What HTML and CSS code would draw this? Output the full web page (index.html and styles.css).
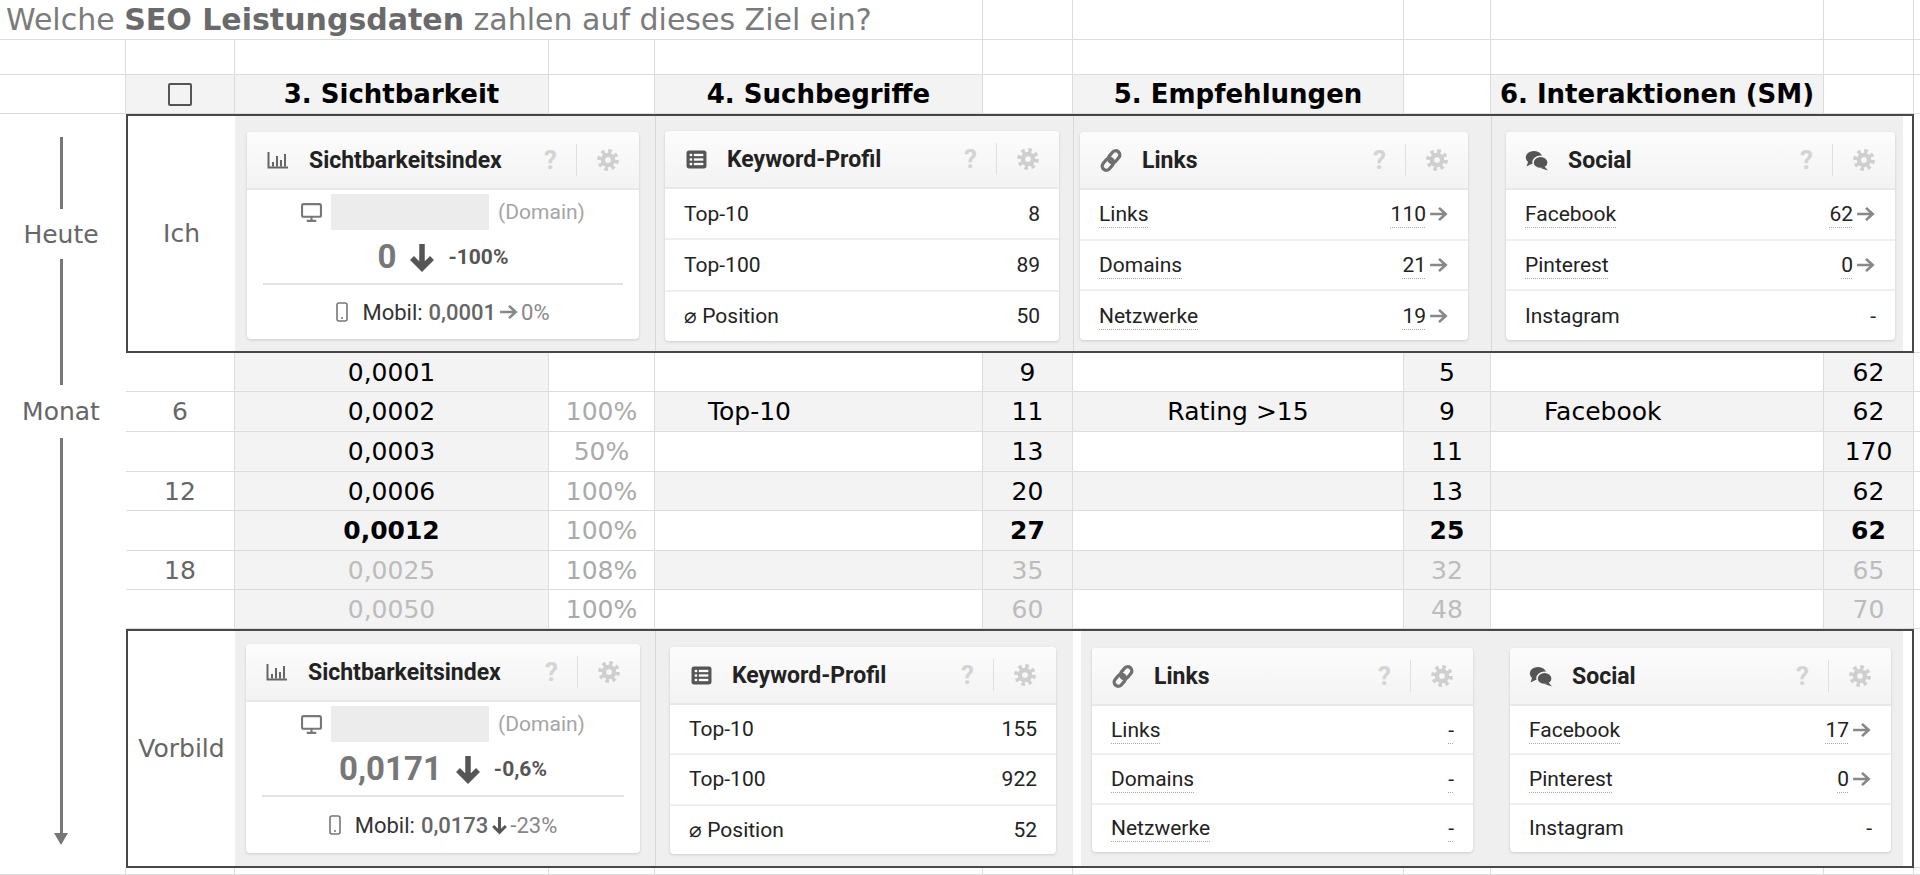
FILE: index.html
```html
<!DOCTYPE html>
<html lang="de">
<head>
<meta charset="utf-8">
<title>SEO Leistungsdaten</title>
<link rel="stylesheet" href="styles.css">
</head>
<body>
<div class="sheet">
  <!-- row 1 -->
  <div class="c title-cell">Welche&nbsp;<b>SEO Leistungsdaten</b>&nbsp;zahlen auf dieses Ziel ein?</div>
  <div class="c"></div><div class="c"></div><div class="c"></div><div class="c"></div><div class="c"></div><div class="c last"></div>
  <!-- row 2 -->
  <div class="c"></div><div class="c"></div><div class="c"></div><div class="c"></div><div class="c"></div><div class="c"></div><div class="c"></div><div class="c"></div><div class="c"></div><div class="c"></div><div class="c last"></div>
  <!-- row 3 header -->
  <div class="c"></div>
  <div class="c g"><span class="checkbox"></span></div>
  <div class="c g hd">3. Sichtbarkeit</div>
  <div class="c"></div>
  <div class="c g hd">4. Suchbegriffe</div>
  <div class="c"></div>
  <div class="c g hd">5. Empfehlungen</div>
  <div class="c"></div>
  <div class="c g hd">6. Interaktionen (SM)</div>
  <div class="c"></div>
  <div class="c last"></div>

  <!-- timeline column -->
  <div class="timeline">
    <div class="tl-seg s1"></div>
    <div class="tl-lab l1">Heute</div>
    <div class="tl-seg s2"></div>
    <div class="tl-lab l2">Monat</div>
    <div class="tl-seg s3"></div>
    <div class="tl-head"></div>
  </div>

  <!-- Ich box -->
  <div class="box row-ich">
    <div class="who">Ich</div>
    <div class="panel pi1">
      <div class="card ci1">
        <div class="card-head">
          <span class="ico"><svg width="22" height="18" viewBox="0 0 22 18"><path d="M1.5 1v15.5H21" stroke="#666" stroke-width="2" fill="none"/><rect x="5" y="11" width="2" height="4.5" fill="#666"/><rect x="9" y="5" width="2" height="10.5" fill="#666"/><rect x="13" y="9" width="2" height="6.5" fill="#666"/><rect x="17" y="3" width="2" height="12.5" fill="#666"/></svg></span>
          <span class="title">Sichtbarkeitsindex</span>
          <span class="help">?</span><span class="sep"></span>
          <svg class="gear" width="22" height="22" viewBox="0 0 20 20"><circle cx="10" cy="10" r="6.6" fill="#cfcfcf"/><circle cx="10" cy="10" r="8" fill="none" stroke="#cfcfcf" stroke-width="3.8" stroke-dasharray="3.14 3.14"/><circle cx="10" cy="10" r="2.6" fill="#f7f7f7"/></svg>
        </div>
        <div class="si-body">
          <div class="si-dom">
            <svg width="21" height="19" viewBox="0 0 20 18"><rect x="1" y="1" width="18" height="12" rx="1.5" stroke="#777" stroke-width="2" fill="none"/><path d="M10 13v3M5.5 17h9" stroke="#777" stroke-width="2"/></svg>
            <span class="si-rect"></span><span class="si-domtxt">(Domain)</span>
          </div>
          <div class="si-val">
            <span class="si-num">0</span>
            <svg width="30" height="30" viewBox="0 0 30 30"><path d="M15 2v24M5 16l10 10 10-10" stroke="#555" stroke-width="5.5" fill="none"/></svg>
            <span class="si-pct">-100%</span>
          </div>
          <div class="si-div"></div>
          <div class="si-mob">
            <svg class="phone" width="12" height="20" viewBox="0 0 12 20"><rect x="1" y="1" width="10" height="18" rx="2" stroke="#777" stroke-width="1.6" fill="none"/><circle cx="6" cy="16" r="1" fill="#777"/></svg>
            <span class="mob-l">Mobil:</span><span class="mob-v">0,0001</span>
            <svg class="rarr" width="20" height="16" viewBox="0 0 18 14"><path d="M1 7h14M9 1.5l6 5.5-6 5.5" stroke="#888" stroke-width="2.4" fill="none"/></svg>
            <span class="mob-p">0%</span>
          </div>
        </div>
      </div>
    </div>
    <div class="panel pi2">
      <div class="card ci2">
        <div class="card-head">
          <span class="ico"><svg width="21" height="19" viewBox="0 0 20 18"><rect x="0.5" y="0.5" width="19" height="17" rx="2.5" fill="#555"/><rect x="3.5" y="3.6" width="2.4" height="2.2" fill="#fff"/><rect x="7.5" y="3.6" width="9" height="2.2" fill="#fff"/><rect x="3.5" y="7.9" width="2.4" height="2.2" fill="#fff"/><rect x="7.5" y="7.9" width="9" height="2.2" fill="#fff"/><rect x="3.5" y="12.2" width="2.4" height="2.2" fill="#fff"/><rect x="7.5" y="12.2" width="9" height="2.2" fill="#fff"/></svg></span>
          <span class="title">Keyword-Profil</span>
          <span class="help">?</span><span class="sep"></span>
          <svg class="gear" width="22" height="22" viewBox="0 0 20 20"><circle cx="10" cy="10" r="6.6" fill="#cfcfcf"/><circle cx="10" cy="10" r="8" fill="none" stroke="#cfcfcf" stroke-width="3.8" stroke-dasharray="3.14 3.14"/><circle cx="10" cy="10" r="2.6" fill="#f7f7f7"/></svg>
        </div>
        <div class="row"><span>Top-10</span><span>8</span></div>
        <div class="row"><span>Top-100</span><span>89</span></div>
        <div class="row"><span>&#8960; Position</span><span>50</span></div>
      </div>
    </div>
    <div class="panel pi3">
      <div class="card ci3">
        <div class="card-head">
          <span class="ico"><svg width="25" height="25" viewBox="0 0 22 22"><g transform="rotate(-50 11 11)" stroke="#6f6f6f" stroke-width="3" fill="none"><rect x="0.5" y="7.2" width="12" height="7.6" rx="3.8"/><rect x="9.5" y="7.2" width="12" height="7.6" rx="3.8"/></g></svg></span>
          <span class="title">Links</span>
          <span class="help">?</span><span class="sep"></span>
          <svg class="gear" width="22" height="22" viewBox="0 0 20 20"><circle cx="10" cy="10" r="6.6" fill="#cfcfcf"/><circle cx="10" cy="10" r="8" fill="none" stroke="#cfcfcf" stroke-width="3.8" stroke-dasharray="3.14 3.14"/><circle cx="10" cy="10" r="2.6" fill="#f7f7f7"/></svg>
        </div>
        <div class="row"><span class="dot">Links</span><span class="val"><span class="dot">110</span><svg class="rarr" width="20" height="16" viewBox="0 0 18 14"><path d="M1 7h14M9 1.5l6 5.5-6 5.5" stroke="#888" stroke-width="2.4" fill="none"/></svg></span></div>
        <div class="row"><span class="dot">Domains</span><span class="val"><span class="dot">21</span><svg class="rarr" width="20" height="16" viewBox="0 0 18 14"><path d="M1 7h14M9 1.5l6 5.5-6 5.5" stroke="#888" stroke-width="2.4" fill="none"/></svg></span></div>
        <div class="row"><span class="dot">Netzwerke</span><span class="val"><span class="dot">19</span><svg class="rarr" width="20" height="16" viewBox="0 0 18 14"><path d="M1 7h14M9 1.5l6 5.5-6 5.5" stroke="#888" stroke-width="2.4" fill="none"/></svg></span></div>
      </div>
    </div>
    <div class="panel pi4">
      <div class="card ci4">
        <div class="card-head">
          <span class="ico"><svg width="27" height="23" viewBox="0 0 24 21"><ellipse cx="9" cy="7.5" rx="8.2" ry="6.6" fill="#555"/><path d="M3.2 11.5L1.5 16.5 8 13.2z" fill="#555"/><ellipse cx="15.6" cy="12.4" rx="7.6" ry="6.2" fill="#555" stroke="#f7f7f7" stroke-width="1.6"/><path d="M19.5 16.5L23 20.5 15.5 18z" fill="#555"/></svg></span>
          <span class="title">Social</span>
          <span class="help">?</span><span class="sep"></span>
          <svg class="gear" width="22" height="22" viewBox="0 0 20 20"><circle cx="10" cy="10" r="6.6" fill="#cfcfcf"/><circle cx="10" cy="10" r="8" fill="none" stroke="#cfcfcf" stroke-width="3.8" stroke-dasharray="3.14 3.14"/><circle cx="10" cy="10" r="2.6" fill="#f7f7f7"/></svg>
        </div>
        <div class="row"><span class="dot">Facebook</span><span class="val"><span class="dot">62</span><svg class="rarr" width="20" height="16" viewBox="0 0 18 14"><path d="M1 7h14M9 1.5l6 5.5-6 5.5" stroke="#888" stroke-width="2.4" fill="none"/></svg></span></div>
        <div class="row"><span class="dot">Pinterest</span><span class="val"><span class="dot">0</span><svg class="rarr" width="20" height="16" viewBox="0 0 18 14"><path d="M1 7h14M9 1.5l6 5.5-6 5.5" stroke="#888" stroke-width="2.4" fill="none"/></svg></span></div>
        <div class="row"><span>Instagram</span><span>-</span></div>
      </div>
    </div>
  </div>
  <div class="c last"></div>

  <!-- data rows -->
  <div class="c"></div><div class="c g">0,0001</div><div class="c"></div><div class="c"></div><div class="c g">9</div><div class="c"></div><div class="c g">5</div><div class="c"></div><div class="c g">62</div><div class="c last"></div>

  <div class="c lab">6</div><div class="c g">0,0002</div><div class="c pc">100%</div><div class="c g left">Top-10</div><div class="c g">11</div><div class="c g">Rating &gt;15</div><div class="c g">9</div><div class="c g left">Facebook</div><div class="c g">62</div><div class="c last"></div>

  <div class="c"></div><div class="c g">0,0003</div><div class="c pc">50%</div><div class="c"></div><div class="c g">13</div><div class="c"></div><div class="c g">11</div><div class="c"></div><div class="c g">170</div><div class="c last"></div>

  <div class="c lab">12</div><div class="c g">0,0006</div><div class="c pc">100%</div><div class="c g"></div><div class="c g">20</div><div class="c g"></div><div class="c g">13</div><div class="c g"></div><div class="c g">62</div><div class="c last"></div>

  <div class="c"></div><div class="c g b">0,0012</div><div class="c pc">100%</div><div class="c"></div><div class="c g b">27</div><div class="c"></div><div class="c g b">25</div><div class="c"></div><div class="c g b">62</div><div class="c last"></div>

  <div class="c lab">18</div><div class="c g fd">0,0025</div><div class="c pc">108%</div><div class="c g"></div><div class="c g fd">35</div><div class="c g"></div><div class="c g fd">32</div><div class="c g"></div><div class="c g fd">65</div><div class="c last"></div>

  <div class="c"></div><div class="c g fd">0,0050</div><div class="c pc">100%</div><div class="c"></div><div class="c g fd">60</div><div class="c"></div><div class="c g fd">48</div><div class="c"></div><div class="c g fd">70</div><div class="c last"></div>

  <!-- Vorbild box -->
  <div class="box row-vor">
    <div class="who">Vorbild</div>
    <div class="panel pv1">
      <div class="card cv1">
        <div class="card-head">
          <span class="ico"><svg width="22" height="18" viewBox="0 0 22 18"><path d="M1.5 1v15.5H21" stroke="#666" stroke-width="2" fill="none"/><rect x="5" y="11" width="2" height="4.5" fill="#666"/><rect x="9" y="5" width="2" height="10.5" fill="#666"/><rect x="13" y="9" width="2" height="6.5" fill="#666"/><rect x="17" y="3" width="2" height="12.5" fill="#666"/></svg></span>
          <span class="title">Sichtbarkeitsindex</span>
          <span class="help">?</span><span class="sep"></span>
          <svg class="gear" width="22" height="22" viewBox="0 0 20 20"><circle cx="10" cy="10" r="6.6" fill="#cfcfcf"/><circle cx="10" cy="10" r="8" fill="none" stroke="#cfcfcf" stroke-width="3.8" stroke-dasharray="3.14 3.14"/><circle cx="10" cy="10" r="2.6" fill="#f7f7f7"/></svg>
        </div>
        <div class="si-body">
          <div class="si-dom">
            <svg width="21" height="19" viewBox="0 0 20 18"><rect x="1" y="1" width="18" height="12" rx="1.5" stroke="#777" stroke-width="2" fill="none"/><path d="M10 13v3M5.5 17h9" stroke="#777" stroke-width="2"/></svg>
            <span class="si-rect"></span><span class="si-domtxt">(Domain)</span>
          </div>
          <div class="si-val">
            <span class="si-num">0,0171</span>
            <svg width="30" height="30" viewBox="0 0 30 30"><path d="M15 2v24M5 16l10 10 10-10" stroke="#555" stroke-width="5.5" fill="none"/></svg>
            <span class="si-pct">-0,6%</span>
          </div>
          <div class="si-div"></div>
          <div class="si-mob">
            <svg class="phone" width="12" height="20" viewBox="0 0 12 20"><rect x="1" y="1" width="10" height="18" rx="2" stroke="#777" stroke-width="1.6" fill="none"/><circle cx="6" cy="16" r="1" fill="#777"/></svg>
            <span class="mob-l">Mobil:</span><span class="mob-v">0,0173</span>
            <svg class="darr" width="17" height="19" viewBox="0 0 16 18"><path d="M8 1v14M2 9.5l6 6 6-6" stroke="#555" stroke-width="2.8" fill="none"/></svg>
            <span class="mob-p">-23%</span>
          </div>
        </div>
      </div>
    </div>
    <div class="panel pv2">
      <div class="card cv2">
        <div class="card-head">
          <span class="ico"><svg width="21" height="19" viewBox="0 0 20 18"><rect x="0.5" y="0.5" width="19" height="17" rx="2.5" fill="#555"/><rect x="3.5" y="3.6" width="2.4" height="2.2" fill="#fff"/><rect x="7.5" y="3.6" width="9" height="2.2" fill="#fff"/><rect x="3.5" y="7.9" width="2.4" height="2.2" fill="#fff"/><rect x="7.5" y="7.9" width="9" height="2.2" fill="#fff"/><rect x="3.5" y="12.2" width="2.4" height="2.2" fill="#fff"/><rect x="7.5" y="12.2" width="9" height="2.2" fill="#fff"/></svg></span>
          <span class="title">Keyword-Profil</span>
          <span class="help">?</span><span class="sep"></span>
          <svg class="gear" width="22" height="22" viewBox="0 0 20 20"><circle cx="10" cy="10" r="6.6" fill="#cfcfcf"/><circle cx="10" cy="10" r="8" fill="none" stroke="#cfcfcf" stroke-width="3.8" stroke-dasharray="3.14 3.14"/><circle cx="10" cy="10" r="2.6" fill="#f7f7f7"/></svg>
        </div>
        <div class="row"><span>Top-10</span><span>155</span></div>
        <div class="row"><span>Top-100</span><span>922</span></div>
        <div class="row"><span>&#8960; Position</span><span>52</span></div>
      </div>
    </div>
    <div class="panel pv3">
      <div class="card cv3">
        <div class="card-head">
          <span class="ico"><svg width="25" height="25" viewBox="0 0 22 22"><g transform="rotate(-50 11 11)" stroke="#6f6f6f" stroke-width="3" fill="none"><rect x="0.5" y="7.2" width="12" height="7.6" rx="3.8"/><rect x="9.5" y="7.2" width="12" height="7.6" rx="3.8"/></g></svg></span>
          <span class="title">Links</span>
          <span class="help">?</span><span class="sep"></span>
          <svg class="gear" width="22" height="22" viewBox="0 0 20 20"><circle cx="10" cy="10" r="6.6" fill="#cfcfcf"/><circle cx="10" cy="10" r="8" fill="none" stroke="#cfcfcf" stroke-width="3.8" stroke-dasharray="3.14 3.14"/><circle cx="10" cy="10" r="2.6" fill="#f7f7f7"/></svg>
        </div>
        <div class="row"><span class="dot">Links</span><span class="dot">-</span></div>
        <div class="row"><span class="dot">Domains</span><span class="dot">-</span></div>
        <div class="row"><span class="dot">Netzwerke</span><span class="dot">-</span></div>
      </div>
      <div class="card cv4">
        <div class="card-head">
          <span class="ico"><svg width="27" height="23" viewBox="0 0 24 21"><ellipse cx="9" cy="7.5" rx="8.2" ry="6.6" fill="#555"/><path d="M3.2 11.5L1.5 16.5 8 13.2z" fill="#555"/><ellipse cx="15.6" cy="12.4" rx="7.6" ry="6.2" fill="#555" stroke="#f7f7f7" stroke-width="1.6"/><path d="M19.5 16.5L23 20.5 15.5 18z" fill="#555"/></svg></span>
          <span class="title">Social</span>
          <span class="help">?</span><span class="sep"></span>
          <svg class="gear" width="22" height="22" viewBox="0 0 20 20"><circle cx="10" cy="10" r="6.6" fill="#cfcfcf"/><circle cx="10" cy="10" r="8" fill="none" stroke="#cfcfcf" stroke-width="3.8" stroke-dasharray="3.14 3.14"/><circle cx="10" cy="10" r="2.6" fill="#f7f7f7"/></svg>
        </div>
        <div class="row"><span class="dot">Facebook</span><span class="val"><span class="dot">17</span><svg class="rarr" width="20" height="16" viewBox="0 0 18 14"><path d="M1 7h14M9 1.5l6 5.5-6 5.5" stroke="#888" stroke-width="2.4" fill="none"/></svg></span></div>
        <div class="row"><span class="dot">Pinterest</span><span class="val"><span class="dot">0</span><svg class="rarr" width="20" height="16" viewBox="0 0 18 14"><path d="M1 7h14M9 1.5l6 5.5-6 5.5" stroke="#888" stroke-width="2.4" fill="none"/></svg></span></div>
        <div class="row"><span>Instagram</span><span>-</span></div>
      </div>
    </div>
  </div>
  <div class="c last"></div>

  <!-- bottom row -->
  <div class="c"></div><div class="c"></div><div class="c"></div><div class="c"></div><div class="c"></div><div class="c"></div><div class="c"></div><div class="c"></div><div class="c"></div><div class="c"></div><div class="c last"></div>
</div>
</body>
</html>
```

FILE: styles.css
```css
html, body {
  margin: 0;
  padding: 0;
  background: #fff;
  width: 1920px;
  height: 875px;
  overflow: hidden;
}

.sheet {
  display: grid;
  grid-template-columns: 126px 109px 314px 106px 328px 90px 331px 87px 333px 90px 6px;
  grid-template-rows: 40px 35px 39px 239px 39px 40px 40px 39px 40px 39px 39px 239px 7px;
  width: 1920px;
  height: 875px;
  font-family: "DejaVu Sans", Verdana, sans-serif;
  font-size: 25px;
  color: #000;
}

.c {
  box-sizing: border-box;
  border-right: 1px solid #dcdcdc;
  border-bottom: 1px solid #dcdcdc;
  display: flex;
  align-items: center;
  justify-content: center;
  white-space: nowrap;
  overflow: visible;
}

.c.last { border-right: none; }

.title-cell {
  grid-column: 1 / 6;
  grid-row: 1;
  justify-content: flex-start;
  padding-left: 6px;
  font-size: 30px;
  color: #7b7b7b;
}

.title-cell b {
  font-weight: 700;
  color: #6a6a6a;
}

.g { background: #f3f3f3; }

.hd {
  font-weight: 700;
  font-size: 26px;
  color: #000;
}

.checkbox {
  width: 24px;
  height: 23px;
  box-sizing: border-box;
  border: 2.5px solid #555;
  border-radius: 2px;
}

.lab { color: #666; }
.pc { color: #aaa; }
.fd { color: #bcbcbc; }
.b { font-weight: 700; }
.left { justify-content: flex-start; padding-left: 53px; }

/* timeline */
.timeline {
  grid-column: 1;
  grid-row: 4 / 13;
  display: flex;
  flex-direction: column;
  align-items: center;
  padding-top: 23px;
  padding-right: 4px;
  box-sizing: border-box;
}

.tl-seg { width: 3px; background: #777; }
.s1 { height: 72px; }
.s2 { height: 126px; }
.s3 { flex: 1; }

.tl-lab {
  display: flex;
  align-items: center;
  color: #666;
  font-size: 25px;
}
.l1 { height: 50px; }
.l2 { height: 53px; }

.tl-head {
  width: 0;
  height: 0;
  border-left: 7px solid transparent;
  border-right: 7px solid transparent;
  border-top: 12px solid #777;
  margin-bottom: 23px;
}

/* boxes */
.box {
  grid-column: 2 / 11;
  box-sizing: border-box;
  border: 2px solid #474747;
  display: flex;
  background: #fff;
}

.row-ich { grid-row: 4; }
.row-vor { grid-row: 12; }

.who {
  width: 107px;
  flex: none;
  display: flex;
  align-items: center;
  justify-content: center;
  color: #666;
  font-size: 25px;
}

.panel {
  background: #efefef;
  box-sizing: border-box;
  display: flex;
  align-items: flex-start;
  flex: none;
}

.panel + .panel { border-left: 1px solid #d9d9d9; }

.pi1 { width: 420px; padding: 16px 0 0 12px; }
.pi2 { width: 418px; padding: 15px 0 0 9px; }
.pi3 { width: 418px; padding: 16px 0 0 6px; }
.pi4 { width: 412px; padding: 16px 0 0 14px; }

.pv1 { width: 420px; padding: 13px 0 0 11px; }
.pv2 { width: 418px; padding: 16px 0 0 14px; }
.pv3 {
  width: 822px;
  padding: 17px 0 0 11px;
  margin-left: 8px;
  border-left: none !important;
}

/* cards */
.card {
  background: #fff;
  border-radius: 4px;
  box-shadow: 0 1px 3px rgba(0, 0, 0, 0.15);
  display: flex;
  flex-direction: column;
  overflow: hidden;
  font-family: Roboto, "Liberation Sans", sans-serif;
  color: #222;
  flex: none;
}

.ci1 { width: 392px; height: 207px; }
.ci2 { width: 394px; height: 210px; }
.ci3 { width: 388px; height: 208px; }
.ci4 { width: 389px; height: 208px; }
.cv1 { width: 394px; height: 209px; }
.cv2 { width: 386px; height: 207px; }
.cv3 { width: 381px; height: 204px; }
.cv4 { width: 381px; height: 204px; margin-left: 37px; }

.card-head {
  height: 58px;
  flex: none;
  box-sizing: border-box;
  display: flex;
  align-items: center;
  padding: 0 20px 0 19px;
  background: linear-gradient(#fcfcfc, #f3f3f3);
  border-bottom: 2px solid #e8e8e8;
}

.ico {
  width: 24px;
  height: 24px;
  margin-right: 19px;
  display: flex;
  align-items: center;
  justify-content: center;
  flex: none;
}

.title {
  flex: 1;
  font-weight: 700;
  font-size: 23px;
  color: #222;
}

.help {
  font-weight: 700;
  font-size: 26px;
  color: #d4d4d4;
}

.sep {
  width: 1px;
  height: 32px;
  background: #e0e0e0;
  margin: 0 20px 0 19px;
}

.gear { flex: none; }

.row {
  flex: 1;
  display: flex;
  align-items: center;
  justify-content: space-between;
  padding: 0 19px;
  font-size: 21px;
  color: #222;
}

.row + .row { border-top: 2px solid #efefef; }

.val {
  display: flex;
  align-items: center;
}

.rarr { margin-left: 3px; }

.dot {
  text-decoration: underline dotted #a8a8a8;
  text-decoration-thickness: 1px;
  text-underline-offset: 6px;
}

/* Sichtbarkeitsindex body */
.si-body {
  flex: 1;
  display: flex;
  flex-direction: column;
  align-items: center;
}

.si-dom {
  margin-top: 4px;
  height: 36px;
  display: flex;
  align-items: center;
  gap: 9px;
}

.si-rect {
  width: 158px;
  height: 36px;
  background: #ececec;
}

.si-domtxt {
  color: #a5a5a5;
  font-size: 21px;
}

.si-val {
  height: 53px;
  display: flex;
  align-items: center;
  gap: 11px;
}

.si-num {
  font-size: 33px;
  font-weight: 700;
  color: #777;
}

.si-pct {
  font-size: 21px;
  font-weight: 700;
  color: #555;
}

.si-div {
  align-self: stretch;
  margin: 0 16px;
  height: 2px;
  background: #e2e2e2;
}

.si-mob {
  flex: 1;
  display: flex;
  align-items: center;
  font-size: 22px;
}

.phone { margin-right: 14px; }
.mob-l { color: #333; margin-right: 6px; }
.mob-v { color: #666; font-weight: 500; }
.mob-p { color: #888; margin-left: 2px; }
.darr { margin-left: 3px; }
```
